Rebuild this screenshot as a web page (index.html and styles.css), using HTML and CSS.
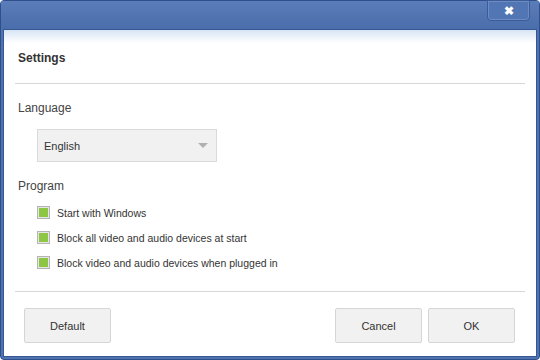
FILE: index.html
```html
<!DOCTYPE html>
<html lang="en">
<head>
  <meta charset="UTF-8" />
  <title>Settings</title>
  <link rel="stylesheet" href="styles.css">
</head>
<body>
  <div class="window">
    <div class="titlebar">
      <button class="close-btn" type="button">&#10006;</button>
    </div>

    <div class="content">
      <div class="header">Settings</div>

      <!-- Sprache -->
      <div class="section">
        <div class="label">Language</div>
        <div class="select">
          <span>English</span>
          <span class="arrow"></span>
        </div>

        <div class="label program">Program</div>
        <div class="options">
          <label class="option"><span class="check"><i></i></span>Start with Windows</label>
          <label class="option"><span class="check"><i></i></span>Block all video and audio devices at start</label>
          <label class="option"><span class="check"><i></i></span>Block video and audio devices when plugged in</label>
        </div>
      </div>

      <div class="footer">
        <button type="button" class="btn">Default</button>
        <div class="right">
          <button type="button" class="btn">Cancel</button>
          <button type="button" class="btn">OK</button>
        </div>
      </div>
    </div>
  </div>
</body>
</html>
```

FILE: styles.css
```css
body {
  margin: 0;
  font-family: "Liberation Sans", Arial, sans-serif;
  color: #333;
  background: #fff;
}

.window {
  width: 540px;
  height: 360px;
  box-sizing: border-box;
  border: 1px solid #2e4f8c;
  border-radius: 4px;
  background: #4f72b0;
  padding: 0 2px 2px 2px;
  display: flex;
  flex-direction: column;
}

.titlebar {
  height: 28px;
  background: linear-gradient(#5b7eba, #4a6dab);
  margin: 0 -2px;
  position: relative;
}

.close-btn {
  position: absolute;
  top: -1px;
  right: 9px;
  width: 43px;
  height: 21px;
  border: 1px solid #3c5c98;
  border-radius: 0 0 4px 4px;
  box-shadow: inset 0 0 0 1px #6d8cc3;
  background: #5276b3;
  color: #fff;
  font-size: 12px;
  font-weight: bold;
  padding: 0;
  line-height: 18px;
}

.content {
  flex: 1;
  border: 1px solid #365792;
  background: linear-gradient(#d6e4f4, #fff 13px);
  display: flex;
  flex-direction: column;
  padding: 0 11px;
}

.header {
  padding: 20px 0 0 3px;
  height: 33px;
  line-height: 16px;
  font-size: 12px;
  font-weight: bold;
  color: #333;
  border-bottom: 1px solid #d8d8d8;
}

.section {
  padding: 16px 0 0 3px;
}

.label {
  font-size: 12px;
  line-height: 16px;
  color: #444;
}

.select {
  margin: 13px 0 0 19px;
  width: 164px;
  height: 31px;
  border: 1px solid #dadada;
  background: #f1f1f1;
  display: flex;
  align-items: center;
  justify-content: space-between;
  padding: 0 8px 0 6px;
  font-size: 11px;
  color: #333;
}

.arrow {
  width: 0;
  height: 0;
  border-left: 5px solid transparent;
  border-right: 5px solid transparent;
  border-top: 5px solid #b0b0b0;
}

.program {
  margin-top: 16px;
}

.options {
  margin: 6px 0 0 19px;
}

.option {
  height: 25px;
  display: flex;
  align-items: center;
  gap: 7px;
  font-size: 10.5px;
  color: #333;
}

.check {
  width: 9px;
  height: 9px;
  border: 1px solid #b4b4b4;
  padding: 1px;
  background: #fff;
  box-shadow: inset 0 0 0 1px #e6e6e6;
}

.check i {
  display: block;
  width: 9px;
  height: 9px;
  background: #8cc643;
}

.footer {
  margin-top: auto;
  border-top: 1px solid #d8d8d8;
  padding: 16px 10px 13px 9px;
  display: flex;
  justify-content: space-between;
}

.right {
  display: flex;
  gap: 6px;
}

.btn {
  width: 87px;
  height: 35px;
  border: 1px solid #d6d6d6;
  border-radius: 2px;
  background: #f1f1f1;
  font-family: "Liberation Sans", Arial, sans-serif;
  font-size: 11px;
  color: #333;
}
```
